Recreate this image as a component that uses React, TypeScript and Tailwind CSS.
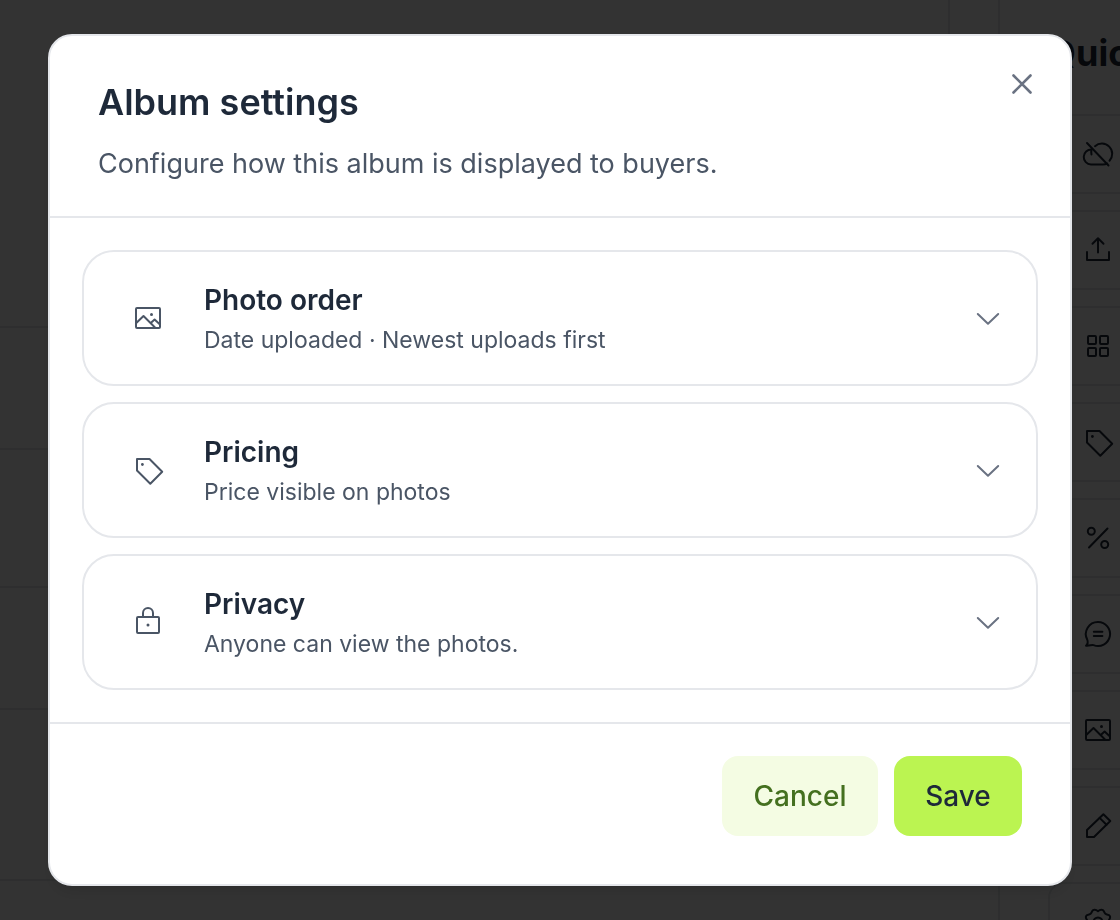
import { useState } from "react";
import type { ReactNode } from "react";

const ICONS: Record<string, ReactNode> = {
  cloudOff: (
    <>
      <path d="M5 5L26.5 27.5" />
      <path d="M13 8.2A10.3 10.3 0 0 1 27.5 22.8" />
      <path d="M9.5 11.5A7.5 7.5 0 0 0 9 26.5H21c1.5 0 3-.4 4.2-1" />
      <path d="M9.5 11.5c-.3 1.5-.4 3 0 5" />
    </>
  ),
  upload: (
    <>
      <path d="M5 18v8h22v-8" />
      <path d="M16 18.5V4.5M10.5 9.7L16 4.3l5.5 5.4" />
    </>
  ),
  grid: (
    <>
      <rect x="6" y="6" width="8" height="8" rx="1" />
      <rect x="18" y="6" width="8" height="8" rx="1" />
      <rect x="6" y="18" width="8" height="8" rx="1" />
      <rect x="18" y="18" width="8" height="8" rx="1" />
    </>
  ),
  tag: (
    <>
      <path d="M5 5H17.5L30.2 17.8 18.3 29.8 5 16.5Z" />
      <circle cx="10.4" cy="10.5" r="1.4" fill="currentColor" stroke="none" />
    </>
  ),
  percent: (
    <>
      <path d="M25.5 6.5L7 25.5" />
      <circle cx="9.3" cy="9.3" r="3.5" />
      <circle cx="22.7" cy="22.5" r="3.5" />
    </>
  ),
  chat: (
    <>
      <path d="M16 4a12 12 0 1 1-4.5 23.1c-2-.6-3.8 1-7.5.6 1.8-1.5 2.2-3.6 1.2-6.2A12 12 0 0 1 16 4Z" />
      <path d="M11.8 13.8h8.6M11.8 18h8.6" />
    </>
  ),
  image: (
    <>
      <rect x="4" y="6" width="24" height="20" rx="1" />
      <path d="M4 21.2l7.5-7.2L23.5 26" />
      <path d="M19 20.8l3.6-3.3L28 22.5" />
      <circle cx="19.5" cy="12.4" r="1.5" fill="currentColor" stroke="none" />
    </>
  ),
  pencil: (
    <>
      <path d="M5 20L21.4 4.2 28.3 11 12 27H5Z" />
      <path d="M17.6 7.9l6.9 6.9" />
    </>
  ),
  gear: (
    <>
      <path d="M16 5.2C18 3.5 20.8 3 21.7 5c.7 2 1.3 3.5 4 3.7 2.6.4 3 2.6 1.7 4.6-1.2 2-1.2 3.4 0 5.4 1.3 2 .9 4.2-1.7 4.6-2.7.2-3.3 1.7-4 3.7-.9 2-3.7 1.5-5.7-.2-2 1.7-4.8 2.2-5.7.2-.7-2-1.3-3.5-4-3.7-2.6-.4-3-2.6-1.7-4.6 1.2-2 1.2-3.4 0-5.4C3.3 11.3 3.7 9.1 6.3 8.7c2.7-.2 3.3-1.7 4-3.7.9-2 3.7-1.5 5.7.2Z" />
      <circle cx="16" cy="16" r="4.5" />
    </>
  ),
  lock: (
    <>
      <rect x="5" y="11" width="22" height="16" rx="1" />
      <path d="M11 11V7a5 5 0 0 1 10 0v4" />
      <circle cx="16" cy="19" r="1.5" fill="currentColor" stroke="none" />
    </>
  ),
  chevron: <path d="M5.8 12L16 21.8 26.2 12" />,
  close: <path d="M7.5 7.5l17 17M24.5 7.5l-17 17" strokeWidth="2.6" />,
};

function Icon({ name }: { name: string }) {
  return (
    <svg
      className="size-8 shrink-0"
      viewBox="0 0 32 32"
      fill="none"
      stroke="currentColor"
      strokeWidth="2"
      strokeLinecap="round"
      strokeLinejoin="round"
      aria-hidden="true"
    >
      {ICONS[name]}
    </svg>
  );
}

const ACTIONS = [
  { icon: "cloudOff", label: "Unpublish" },
  { icon: "upload", label: "Upload" },
  { icon: "grid", label: "Layout" },
  { icon: "tag", label: "Prices" },
  { icon: "percent", label: "Discounts" },
  { icon: "chat", label: "Comments" },
  { icon: "image", label: "Cover" },
  { icon: "pencil", label: "Edit" },
  { icon: "gear", label: "Settings" },
];

const SECTIONS = [
  {
    icon: "image",
    title: "Photo order",
    summary: "Date uploaded · Newest uploads first",
  },
  { icon: "tag", title: "Pricing", summary: "Price visible on photos" },
  { icon: "lock", title: "Privacy", summary: "Anyone can view the photos." },
];

function AlbumPage() {
  return (
    <div className="flex h-screen gap-12 overflow-hidden" aria-hidden="true" inert>
      {/* Album rows */}
      <main className="min-w-0 flex-1">
        <div className="border-r-2 border-gray-200">
          <div className="h-82 border-b-2 border-gray-200" />
          <div className="h-[122px] border-b-2 border-gray-200" />
          <div className="h-[138px] border-b-2 border-gray-200" />
          <div className="h-[122px] border-b-2 border-gray-200" />
          <div className="h-[171px] border-b-2 border-gray-200" />
        </div>
      </main>

      {/* Quick actions */}
      <aside className="w-[122px] shrink-0 overflow-hidden border-l-2 border-gray-200 pl-12">
        <div className="w-96">
          <h2 className="pt-[30px] pb-[38px] text-[36px] leading-[46px] font-bold">Quick</h2>
          <div className="flex flex-col gap-4">
            {ACTIONS.map((action) => (
              <button
                key={action.icon}
                type="button"
                aria-label={action.label}
                className="flex h-20 items-center rounded-2xl border-2 border-gray-200 px-8"
              >
                <Icon name={action.icon} />
              </button>
            ))}
          </div>
        </div>
      </aside>
    </div>
  );
}

function SettingRow({
  icon,
  title,
  summary,
  open,
  onToggle,
}: {
  icon: string;
  title: string;
  summary: string;
  open: boolean;
  onToggle: () => void;
}) {
  return (
    <button
      type="button"
      aria-expanded={open}
      onClick={onToggle}
      className="flex w-full items-center gap-10 rounded-[32px] border-2 border-gray-200 py-7 pr-8 pl-12 text-left text-gray-600"
    >
      <Icon name={icon} />
      <span className="flex min-w-0 flex-1 flex-col gap-1">
        <span className="text-[28px] leading-10 font-semibold text-gray-800">{title}</span>
        <span className="text-[23px] leading-8">{summary}</span>
      </span>
      <span className="text-gray-500">
        <Icon name="chevron" />
      </span>
    </button>
  );
}

export default function App() {
  const [openSection, setOpenSection] = useState<string | null>(null);

  return (
    <div className="relative min-h-screen bg-white font-['Inter','Liberation_Sans',sans-serif] text-gray-800">
      <AlbumPage />

      <div className="fixed inset-0 flex items-center justify-center bg-black/80 px-12">
        <div
          role="dialog"
          aria-modal="true"
          aria-labelledby="album-settings-title"
          className="relative w-full rounded-3xl border-2 border-gray-200 bg-white shadow-lg"
        >
          {/* Header */}
          <header className="flex flex-col gap-6 border-b-2 border-gray-200 px-12 pt-12 pb-8">
            <h1 id="album-settings-title" className="text-[36px] leading-9 font-semibold">
              Album settings
            </h1>
            <p className="text-[27px] leading-10 text-gray-600">
              Configure how this album is displayed to buyers.
            </p>
          </header>
          <button
            type="button"
            aria-label="Close"
            className="absolute top-8 right-8 text-gray-500"
          >
            <Icon name="close" />
          </button>

          {/* Sections */}
          <div className="flex flex-col gap-4 p-8">
            {SECTIONS.map((section) => (
              <SettingRow
                key={section.title}
                {...section}
                open={openSection === section.title}
                onToggle={() =>
                  setOpenSection(openSection === section.title ? null : section.title)
                }
              />
            ))}
          </div>

          {/* Footer */}
          <footer className="flex justify-end gap-4 border-t-2 border-gray-200 px-12 pt-8 pb-12">
            <button
              type="button"
              className="h-20 w-[156px] rounded-2xl bg-[#f4fce3] text-[28px] font-medium text-[#44701f]"
            >
              Cancel
            </button>
            <button
              type="button"
              className="h-20 w-32 rounded-2xl bg-[#bbf451] text-[28px] font-medium text-gray-800"
            >
              Save
            </button>
          </footer>
        </div>
      </div>
    </div>
  );
}
